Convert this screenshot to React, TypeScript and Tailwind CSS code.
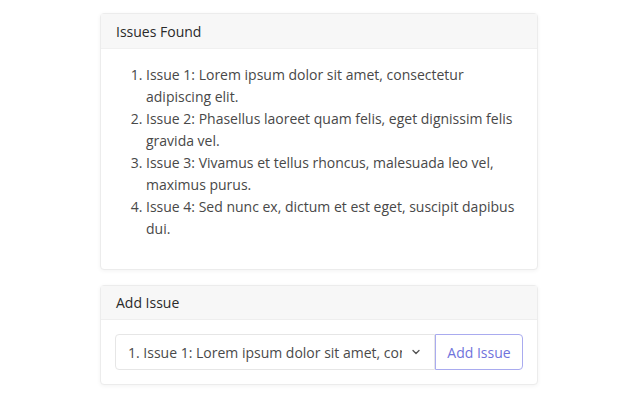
import React from "react";

const issues = [
  "Issue 1: Lorem ipsum dolor sit amet, consectetur adipiscing elit.",
  "Issue 2: Phasellus laoreet quam felis, eget dignissim felis gravida vel.",
  "Issue 3: Vivamus et tellus rhoncus, malesuada leo vel, maximus purus.",
  "Issue 4: Sed nunc ex, dictum et est eget, suscipit dapibus dui.",
];

export default function App() {
  return (
    <div
      className="w-[640px] h-[400px] bg-white overflow-hidden text-[#333]"
      style={{ fontFamily: '"Open Sans", "Noto Sans", sans-serif' }}
    >
      <div className="w-[438px] ml-[100px] pt-[13px] flex flex-col gap-[15px]">
        <div className="border border-[#ececec] rounded-[4px] shadow-[0_1px_4px_rgba(0,0,0,0.05)] bg-white">
          <div className="h-[35px] bg-[#f7f7f7] border-b border-[#f0f0f0] px-[15px] flex items-center text-[14px] text-[#2a2a2a]">
            Issues Found
          </div>
          <div className="pt-[15px] pb-[29px] pl-[45px] pr-[15px]">
            <ol className="list-decimal text-[14px] leading-[22px] text-[#484848]">
              {issues.map((t) => (
                <li key={t}>{t}</li>
              ))}
            </ol>
          </div>
        </div>
        <div className="border border-[#ececec] rounded-[4px] shadow-[0_1px_4px_rgba(0,0,0,0.05)] bg-white">
          <div className="h-[34px] bg-[#f7f7f7] border-b border-[#eeeeee] px-[15px] flex items-center text-[14px] text-[#2a2a2a]">
            Add Issue
          </div>
          <div className="px-[14px] pt-[14px] pb-[14px]">
            <div className="flex h-[36px]">
              <div className="w-[320px] border border-[#e6e6e6] rounded-l-[4px] flex items-center pl-[12px] pr-[12px] text-[14px] text-[#4a4a4a] overflow-hidden">
                <span className="flex-1 min-w-0 overflow-hidden whitespace-nowrap">
                  1. Issue 1: Lorem ipsum dolor sit amet, consectetur adipiscing elit.
                </span>
                <svg width="12" height="12" viewBox="0 0 16 16" className="ml-[8px] shrink-0">
                  <path d="M4 6l4 4 4-4" fill="none" stroke="#555" strokeWidth="1.8" strokeLinecap="round" strokeLinejoin="round" />
                </svg>
              </div>
              <button className="w-[88px] border border-[#a9abef] rounded-r-[4px] text-[14px] text-[#7073dc] bg-white">
                Add Issue
              </button>
            </div>
          </div>
        </div>
      </div>
    </div>
  );
}
